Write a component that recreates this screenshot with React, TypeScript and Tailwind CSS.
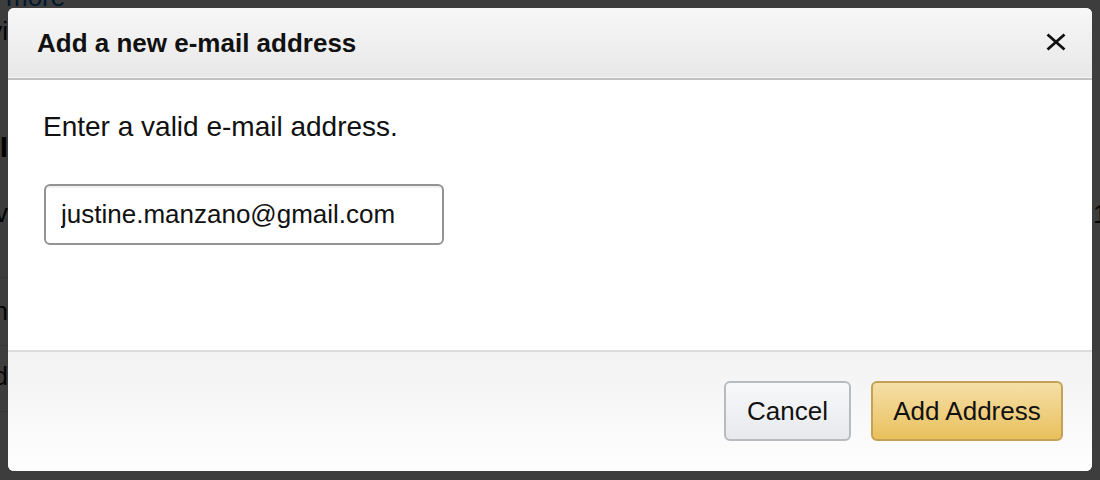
import React from 'react';

const CloseIcon: React.FC = () => (
  <svg width="20" height="18" viewBox="0 0 20 18" fill="none">
    <path d="M1.5 1.5 L18.5 16.5 M18.5 1.5 L1.5 16.5" stroke="#111" strokeWidth="2.8" strokeLinecap="butt" />
  </svg>
);

const App: React.FC = () => {
  return (
    <div className="relative w-[1100px] h-[480px] overflow-hidden bg-white font-['Liberation_Sans',Arial,sans-serif] text-[#111]">
      {/* Page behind the modal */}
      <div className="flex flex-col h-full">
        <div className="h-[8px] overflow-hidden">
          <div className="-mt-[18px] pl-[6px] text-[26px] leading-[30px] text-[#0066c0] whitespace-nowrap">more</div>
        </div>
        <div className="flex flex-1">
          <div className="w-[8px] overflow-hidden flex flex-col text-[26px] leading-[30px]">
            <div className="mt-[8px] flex justify-end whitespace-nowrap">Provi</div>
            <div className="mt-[84px] flex justify-end whitespace-nowrap text-[30px] leading-[34px] font-bold">I</div>
            <div className="mt-[34px] flex justify-end whitespace-nowrap">rev</div>
            <div className="mt-[49px] border-t border-[#dddddd]" />
            <div className="mt-[18px] flex justify-end whitespace-nowrap">on</div>
            <div className="mt-[19px] border-t border-[#dddddd]" />
            <div className="mt-[15px] flex justify-end whitespace-nowrap">ed</div>
            <div className="mt-[20px] border-t border-[#dddddd]" />
          </div>
          <div className="flex-1" />
          <div className="w-[8px] overflow-hidden flex flex-col text-[26px] leading-[30px]">
            <div className="mt-[191px] pl-[1px] whitespace-nowrap">1</div>
          </div>
        </div>
      </div>

      {/* Overlay + modal */}
      <div className="absolute inset-0 bg-black/[0.76] p-[8px] pb-[9px] flex">
        <div className="flex-1 flex flex-col rounded-[6px] overflow-hidden bg-white">
          {/* Header */}
          <div className="h-[72px] shrink-0 flex items-center justify-between pl-[29px] pr-[26px] bg-gradient-to-b from-[#f7f7f7] to-[#e8e8e8] border-b-2 border-[#c2c2c2] shadow-[inset_0_-1px_0_#f4f4f4]">
            <h4 className="text-[26px] font-bold leading-[30px] text-[#111] -mt-[1px]">Add a new e-mail address</h4>
            <button className="w-[20px] h-[18px] flex items-center justify-center -mt-[3px]">
              <CloseIcon />
            </button>
          </div>

          {/* Body */}
          <div className="h-[270px] shrink-0 px-[36px] pt-[31px]">
            <p className="text-[28px] leading-[32px] text-[#111] -ml-[1px]">Enter a valid e-mail address.</p>
            <input
              type="text"
              readOnly
              value="justine.manzano@gmail.com"
              className="mt-[41px] w-[400px] h-[61px] px-[15px] text-[26px] text-[#111] bg-white border-2 border-[#939393] rounded-[6px] shadow-[inset_0_2px_1px_rgba(0,0,0,0.06)] outline-none font-['Liberation_Sans',Arial,sans-serif]"
            />
          </div>

          {/* Footer */}
          <div className="flex-1 flex items-center justify-end gap-[20px] pr-[29px] pb-[1px] border-t-2 border-[#dcdcdc] bg-gradient-to-b from-[#f2f2f2] to-[#fefefe]">
            <button className="w-[127px] h-[60px] rounded-[6px] border-2 border-[#b7babf] bg-gradient-to-b from-[#f7f8fa] to-[#e7e9ec] text-[26px] text-[#111]">
              Cancel
            </button>
            <button className="w-[192px] h-[60px] rounded-[6px] border-2 border-[#c3a255] bg-gradient-to-b from-[#f5dfa6] to-[#e9c05a] text-[26px] text-[#111]">
              Add Address
            </button>
          </div>
        </div>
      </div>
    </div>
  );
};

export default App;
